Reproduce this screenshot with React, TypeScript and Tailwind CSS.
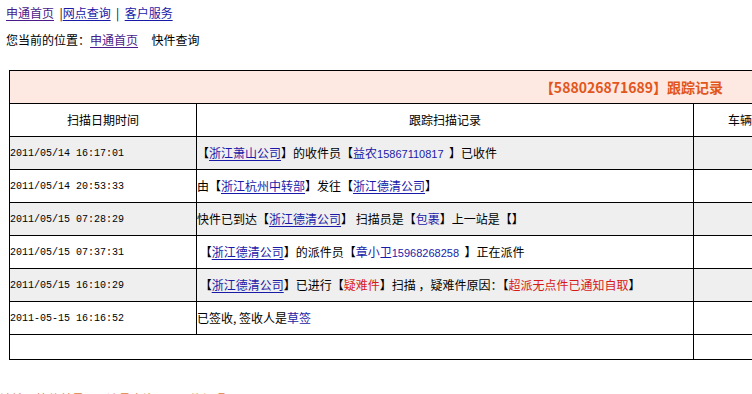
import React from "react";

const cjk = { fontFamily: '"Noto Sans CJK SC", "Liberation Sans", sans-serif' };
const mono = { fontFamily: '"Liberation Mono", monospace' };

function Co({ children }: { children: React.ReactNode }) {
  return <span className="text-[#1a1aa8] underline underline-offset-2">{children}</span>;
}
function Nm({ children }: { children: React.ReactNode }) {
  return <span className="text-[#1a1aa8]">{children}</span>;
}
function Num({ children }: { children: React.ReactNode }) {
  return (
    <span className="text-[#1a1aa8] text-[11px]" style={{ fontFamily: '"Liberation Sans", sans-serif' }}>
      {children}
    </span>
  );
}
function Red({ children }: { children: React.ReactNode }) {
  return <span className="text-[#d81818]">{children}</span>;
}

const rows: { t: string; gray: boolean; c: React.ReactNode }[] = [
  {
    t: "2011/05/14 16:17:01",
    gray: true,
    c: (
      <>
        【<Co>浙江萧山公司</Co>】的收件员【<Nm>益农</Nm><Num>15867110817</Num>&nbsp;&nbsp;】已收件
      </>
    ),
  },
  {
    t: "2011/05/14 20:53:33",
    gray: false,
    c: (
      <>
        由【<Co>浙江杭州中转部</Co>】发往【<Co>浙江德清公司</Co>】
      </>
    ),
  },
  {
    t: "2011/05/15 07:28:29",
    gray: true,
    c: (
      <>
        快件已到达【<Co>浙江德清公司</Co>】&nbsp;扫描员是【<Nm>包裹</Nm>】上一站是【】
      </>
    ),
  },
  {
    t: "2011/05/15 07:37:31",
    gray: false,
    c: (
      <>
        &nbsp;【<Co>浙江德清公司</Co>】的派件员【<Nm>章小卫</Nm><Num>15968268258</Num>&nbsp;&nbsp;】正在派件
      </>
    ),
  },
  {
    t: "2011/05/15 16:10:29",
    gray: true,
    c: (
      <>
        &nbsp;【<Co>浙江德清公司</Co>】已进行【<Red>疑难件</Red>】扫描&nbsp;，疑难件原因：【<Red>超派无点件已通知自取</Red>】
      </>
    ),
  },
  {
    t: "2011-05-15 16:16:52",
    gray: false,
    c: (
      <>
        已签收, 签收人是<Nm>草签</Nm>
      </>
    ),
  },
];

export default function App() {
  return (
    <div className="w-[752px] h-[394px] overflow-hidden bg-white text-[12px] text-black" style={cjk}>
      <div className="pt-[5px] pl-[6px] leading-[16px] whitespace-pre">
        <span className="text-[#4a1a8a] underline underline-offset-2">申通首页</span>
        <span>{"  |"}</span>
        <span className="text-[#1a1aa8] underline underline-offset-2">网点查询</span>
        <span>{"  |  "}</span>
        <span className="text-[#1a1aa8] underline underline-offset-2">客户服务</span>
      </div>
      <div className="mt-[11px] pl-[6px] leading-[16px] whitespace-pre">
        <span>您当前的位置：</span>
        <span className="text-[#4a1a8a] underline underline-offset-2">申通首页</span>
        <span>{"     快件查询"}</span>
      </div>

      <div className="mt-[22px] ml-[9px] w-[820px] border border-black">
        <div className="h-[33px] border-b border-black bg-[#fde9e1] flex items-center">
          <div className="w-[713px] text-right text-[14px] font-bold text-[#e2561c] leading-none">
            【588026871689】跟踪记录
          </div>
        </div>
        <div className="h-[33px] border-b border-black flex">
          <div className="w-[187px] border-r border-black flex items-center justify-center">扫描日期时间</div>
          <div className="w-[497px] border-r border-black flex items-center justify-center">跟踪扫描记录</div>
          <div className="flex-1 flex items-center pl-[34px]">车辆信息</div>
        </div>
        {rows.map((r, i) => (
          <div key={i} className={`h-[33px] border-b border-black flex ${r.gray ? "bg-[#efefef]" : "bg-white"}`}>
            <div className="w-[187px] border-r border-black flex items-center text-[10px]" style={mono}>
              <span>{r.t}</span>
            </div>
            <div className="w-[497px] border-r border-black flex items-center whitespace-pre leading-[16px]">
              <span>{r.c}</span>
            </div>
            <div className="flex-1"></div>
          </div>
        ))}
        <div className="h-[24px] flex">
          <div className="w-[683px]"></div>
          <div className="flex-1 border-l border-black"></div>
        </div>
      </div>

      <div className="mt-[31px] pl-[0px] text-[#e07a3a] leading-[16px] whitespace-pre">
        {"请输入快件单号  ，  达号查询  ，  已件组照  "}
      </div>
    </div>
  );
}
